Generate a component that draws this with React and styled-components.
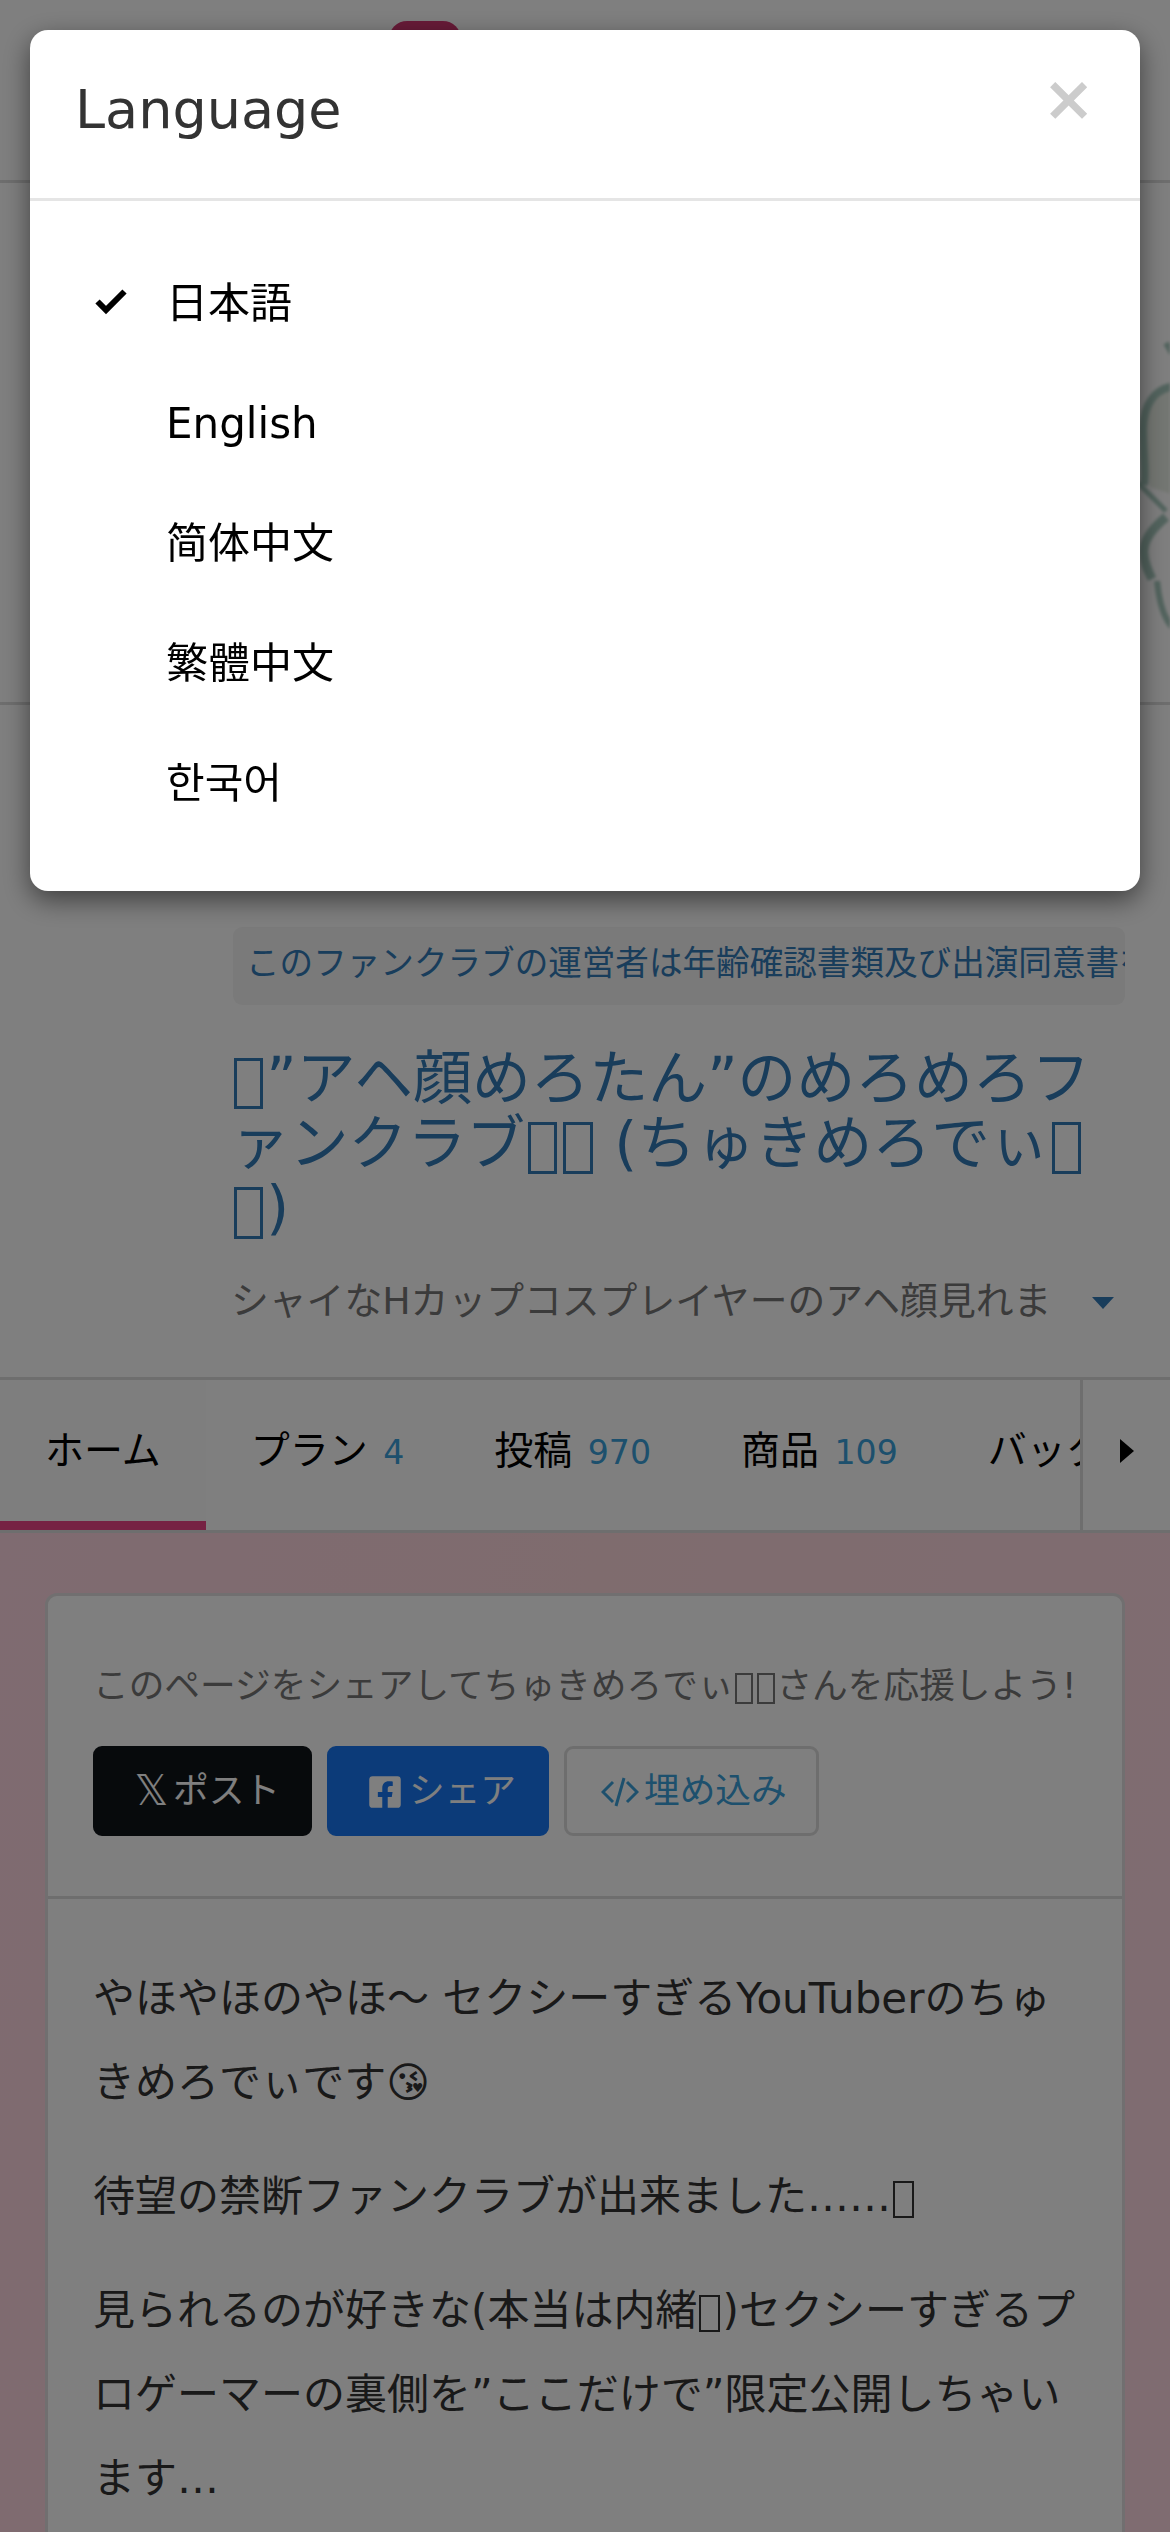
import styled, { createGlobalStyle } from "styled-components";
import { FaFacebookSquare } from "react-icons/fa";

const GlobalStyle = createGlobalStyle`
  * {
    box-sizing: border-box;
  }
  body {
    margin: 0;
    background: #fff;
    color: #333;
    font-family: "DejaVu Sans", "Noto Sans CJK JP", sans-serif;
    font-size: 42px;
    line-height: 1.42857;
  }
  h1, h4, p, ul {
    margin: 0;
    padding: 0;
    font-weight: normal;
  }
`;

const Page = styled.div`
  height: 2532px;
  overflow: hidden;
`;

const Navbar = styled.header`
  height: 183px;
  padding: 21px 0 0 389px;
  border-bottom: 3px solid #ddd;
`;

const Badge = styled.span`
  display: block;
  width: 72px;
  height: 42px;
  border-radius: 18px;
  background: #d03670;
`;

const Cover = styled.div`
  display: flex;
  justify-content: flex-end;
  height: 522px;
  border-bottom: 3px solid #ddd;

  svg {
    width: 40px;
    height: 519px;
    filter: blur(1.5px);
  }
`;

const Profile = styled.section`
  height: 672px;
  padding: 221px 45px 0 231px;
`;

const Notice = styled.a`
  display: block;
  height: 78px;
  margin: 1px 0 0 2px;
  padding: 0 13px;
  border-radius: 9px;
  background: #f5f5f5;
  color: #337ab7;
  font-size: 33.6px;
  line-height: 73px;
  white-space: nowrap;
  overflow: hidden;
`;

const ClubName = styled.h1`
  margin-top: 42px;
  color: #337ab7;
  font-size: 58.8px;
  line-height: 1.1;
`;

/* empty box shown for a symbol without a glyph */
const Mark = styled.span`
  display: inline-block;
  width: 0.5em;
  height: 0.88em;
  margin: 0 0.05em;
  border: max(2px, 0.052em) solid currentColor;
  vertical-align: -0.177em;
`;

const NoWrap = styled.span`
  white-space: nowrap;
`;

const Summary = styled.div`
  display: flex;
  align-items: center;
  justify-content: space-between;
  height: 54px;
  margin-top: 34px;
  padding-right: 11px;
  color: #777;
  font-size: 37.8px;
`;

const CaretDown = styled.i`
  margin-top: 2px;
  border-top: 12px solid #337ab7;
  border-left: 11px solid transparent;
  border-right: 11px solid transparent;
`;

const Tabs = styled.nav`
  display: flex;
  height: 156px;
  border-top: 3px solid #ddd;
  border-bottom: 3px solid #ddd;
`;

const TabList = styled.div`
  display: flex;
  flex: 1;
  overflow: hidden;
`;

const Tab = styled.a`
  flex: none;
  height: 150px;
  padding: 0 45px;
  border-bottom: 9px solid ${({ $active }) => ($active ? "#ec4486" : "transparent")};
  background: ${({ $active }) => ($active ? "#fcfcfc" : "#fff")};
  color: #000;
  font-size: 39px;
  line-height: 141px;
  white-space: nowrap;

  small {
    margin-left: 3px;
    color: #3aa0da;
    font-size: 33.15px;
  }
`;

const TabNext = styled.div`
  display: flex;
  align-items: center;
  width: 90px;
  padding: 0 0 9px 37px;
  border-left: 3px solid #ddd;
`;

const CaretRight = styled.i`
  border-left: 14px solid #000;
  border-top: 12px solid transparent;
  border-bottom: 12px solid transparent;
`;

const Content = styled.main`
  height: 999px;
  padding: 60px 45px 0;
  background: linear-gradient(100deg, #ffd6e2, #ffd8dd 45%, #fed9e3);
`;

const Card = styled.article`
  height: 1100px;
  border: 3px solid #e3dfe0;
  border-radius: 12px;
  background: #fff;
`;

const Share = styled.section`
  height: 303px;
  padding: 60px 45px 0;
  border-bottom: 3px solid #ddd;

  p {
    color: #777;
    font-size: 35.7px;
    line-height: 60px;
    white-space: nowrap;
  }
`;

const ShareButtons = styled.div`
  display: flex;
  gap: 15px;
  margin-top: 30px;
`;

const ShareButton = styled.button`
  display: flex;
  align-items: center;
  width: ${({ $width }) => $width}px;
  height: 90px;
  padding: 0 0 0 36px;
  border: 3px solid ${({ $line, $bg }) => $line || $bg};
  border-radius: 9px;
  background: ${({ $bg }) => $bg};
  color: ${({ $color }) => $color || "#fff"};
  font: inherit;
  font-size: 35.7px;
  line-height: 54px;
  white-space: nowrap;
`;

const XMark = styled.span`
  width: 43px;
  margin-left: -2px;
  font-size: 42px;
`;

const FacebookIcon = styled(FaFacebookSquare)`
  width: 36px;
  height: 36px;
  margin: 2px 6px 0 1px;
`;

const CodeIcon = styled.svg`
  width: 38px;
  height: 30px;
  margin: 2px 5px 0 -2px;
`;

const Intro = styled.section`
  padding: 58px 45px 0;

  p {
    line-height: 84px;
    margin-bottom: 30px;
  }
`;

const Backdrop = styled.div`
  position: fixed;
  inset: 0;
  padding: 30px;
  background: rgba(0, 0, 0, 0.5);
`;

const Dialog = styled.div`
  height: 861px;
  border-radius: 18px;
  background: #fff;
  box-shadow: 0 9px 27px rgba(0, 0, 0, 0.5);
`;

const DialogHeader = styled.div`
  display: flex;
  justify-content: space-between;
  height: 171px;
  padding: 41px 45px 0;
  border-bottom: 3px solid #e5e5e5;

  h4 {
    font-size: 54px;
    line-height: 78px;
  }
`;

const Close = styled.button`
  height: 63px;
  margin-top: -4px;
  padding: 0;
  border: 0;
  background: none;
  color: #ccc;
  font: bold 63px/63px "DejaVu Sans", sans-serif;
`;

const LanguageList = styled.ul`
  padding: 43px 60px;
  list-style: none;
`;

const Language = styled.li`
  display: flex;
  align-items: center;
  height: 120px;
  color: #000;
`;

const CheckSlot = styled.span`
  display: flex;
  width: 76px;
  padding: 0 0 4px 5px;
`;

const languages = [
  { code: "ja", label: "日本語" },
  { code: "en", label: "English" },
  { code: "zh-CN", label: "简体中文" },
  { code: "zh-TW", label: "繁體中文" },
  { code: "ko", label: "한국어" },
];

const tabs = [
  { label: "ホーム" },
  { label: "プラン", count: 4 },
  { label: "投稿", count: 970 },
  { label: "商品", count: 109 },
  { label: "バックナンバー" },
];

const LanguageDialog = ({ current }) => (
  <Backdrop>
    <Dialog>
      <DialogHeader>
        <h4>Language</h4>
        <Close>×</Close>
      </DialogHeader>
      <LanguageList>
        {languages.map(({ code, label }) => (
          <Language key={code}>
            <CheckSlot>
              {code === current && (
                <svg width="32" height="26" viewBox="0 0 32 26">
                  <path d="M2.5 12.5l8.5 8.5L29.5 2.5" fill="none" stroke="#000" strokeWidth="6" />
                </svg>
              )}
            </CheckSlot>
            {label}
          </Language>
        ))}
      </LanguageList>
    </Dialog>
  </Backdrop>
);

const App = () => {
  return (
    <>
      <GlobalStyle />
      <Page>
        <Navbar>
          <Badge />
        </Navbar>
        <Cover>
          {/* edge of the flower drawing */}
          <svg viewBox="0 0 40 519" fill="none" stroke="#a6c8bd">
            <path d="M44 203C24 208 15 222 15 245C16 275 18 290 20 304L44 312Z" fill="#e9efe6" stroke="none" />
            <path d="M44 203C24 206 14 222 13 245C13 270 16 290 14 302" strokeWidth="8" />
            <path d="M8 300L36 328" strokeWidth="5" />
            <path d="M36 334C22 346 12 358 14 372C15 382 18 388 22 396" strokeWidth="9" />
            <path d="M27 398C29 418 33 434 42 444" strokeWidth="6" />
            <path d="M36 160l6 10" strokeWidth="6" />
          </svg>
        </Cover>
        <Profile>
          <Notice>このファンクラブの運営者は年齢確認書類及び出演同意書を提出しています</Notice>
          <ClubName>
            <Mark />”アヘ顔めろたん”のめろめろファンクラブ
            <Mark />
            <Mark /> (ちゅきめろでぃ
            <Mark />
            <NoWrap><Mark />)</NoWrap>
          </ClubName>
          <Summary>
            シャイなHカップコスプレイヤーのアヘ顔見れま
            <CaretDown />
          </Summary>
        </Profile>
        <Tabs>
          <TabList>
            {tabs.map(({ label, count }, i) => (
              <Tab key={label} $active={i === 0}>
                {label}
                {count && <> <small>{count}</small></>}
              </Tab>
            ))}
          </TabList>
          <TabNext>
            <CaretRight />
          </TabNext>
        </Tabs>
        <Content>
          <Card>
            <Share>
              <p>このページをシェアしてちゅきめろでぃ<Mark /><Mark />さんを応援しよう!</p>
              <ShareButtons>
                <ShareButton $width={219} $bg="#0f1419">
                  <XMark>𝕏</XMark>
                  ポスト
                </ShareButton>
                <ShareButton $width={222} $bg="#1877f2">
                  <FacebookIcon />
                  シェア
                </ShareButton>
                <ShareButton $width={255} $bg="#fff" $line="#ddd" $color="#3aa0da">
                  <CodeIcon viewBox="0 0 38 30" fill="none" stroke="currentColor" strokeWidth="3">
                    <path d="M12 5L2 15l10 10M26 5l10 10-10 10M23 1l-8 28" />
                  </CodeIcon>
                  埋め込み
                </ShareButton>
              </ShareButtons>
            </Share>
            <Intro>
              <p>やほやほのやほ〜 セクシーすぎるYouTuberのちゅきめろでぃです😘</p>
              <p>待望の禁断ファンクラブが出来ました……<Mark /></p>
              <p>
                見られるのが好きな(本当は内緒<Mark />)セクシーすぎるプロゲーマーの裏側を”ここだけで”限定公開しちゃいます…
              </p>
            </Intro>
          </Card>
        </Content>
      </Page>
      <LanguageDialog current="ja" />
    </>
  );
};

export default App;
